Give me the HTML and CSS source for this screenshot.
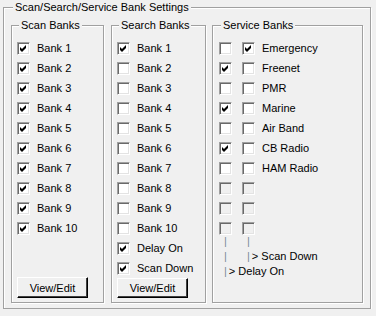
FILE: index.html
```html
<!DOCTYPE html>
<html lang="en">
<head>
    <meta charset="UTF-8">
    <title>Bank Settings</title>
    <link rel="stylesheet" href="styles.css">
</head>
<body>
    <fieldset class="group outer">
        <legend>Scan/Search/Service Bank Settings</legend>
        <div class="columns">

            <!-- Scan banks -->
            <fieldset class="group bank-group scan">
                <legend>Scan Banks</legend>
                <div class="rows">
                    <div class="row"><span class="box on"><svg viewBox="0 0 11 11"><polygon points="2,4 4,6 8,2 8,5 4,9 2,7"/></svg></span>Bank 1</div>
                    <div class="row"><span class="box on"><svg viewBox="0 0 11 11"><polygon points="2,4 4,6 8,2 8,5 4,9 2,7"/></svg></span>Bank 2</div>
                    <div class="row"><span class="box on"><svg viewBox="0 0 11 11"><polygon points="2,4 4,6 8,2 8,5 4,9 2,7"/></svg></span>Bank 3</div>
                    <div class="row"><span class="box on"><svg viewBox="0 0 11 11"><polygon points="2,4 4,6 8,2 8,5 4,9 2,7"/></svg></span>Bank 4</div>
                    <div class="row"><span class="box on"><svg viewBox="0 0 11 11"><polygon points="2,4 4,6 8,2 8,5 4,9 2,7"/></svg></span>Bank 5</div>
                    <div class="row"><span class="box on"><svg viewBox="0 0 11 11"><polygon points="2,4 4,6 8,2 8,5 4,9 2,7"/></svg></span>Bank 6</div>
                    <div class="row"><span class="box on"><svg viewBox="0 0 11 11"><polygon points="2,4 4,6 8,2 8,5 4,9 2,7"/></svg></span>Bank 7</div>
                    <div class="row"><span class="box on"><svg viewBox="0 0 11 11"><polygon points="2,4 4,6 8,2 8,5 4,9 2,7"/></svg></span>Bank 8</div>
                    <div class="row"><span class="box on"><svg viewBox="0 0 11 11"><polygon points="2,4 4,6 8,2 8,5 4,9 2,7"/></svg></span>Bank 9</div>
                    <div class="row"><span class="box on"><svg viewBox="0 0 11 11"><polygon points="2,4 4,6 8,2 8,5 4,9 2,7"/></svg></span>Bank 10</div>
                </div>
                <button class="btn">View/Edit</button>
            </fieldset>

            <!-- Search banks -->
            <fieldset class="group bank-group search">
                <legend>Search Banks</legend>
                <div class="rows">
                    <div class="row"><span class="box on"><svg viewBox="0 0 11 11"><polygon points="2,4 4,6 8,2 8,5 4,9 2,7"/></svg></span>Bank 1</div>
                    <div class="row"><span class="box"></span>Bank 2</div>
                    <div class="row"><span class="box"></span>Bank 3</div>
                    <div class="row"><span class="box"></span>Bank 4</div>
                    <div class="row"><span class="box"></span>Bank 5</div>
                    <div class="row"><span class="box"></span>Bank 6</div>
                    <div class="row"><span class="box"></span>Bank 7</div>
                    <div class="row"><span class="box"></span>Bank 8</div>
                    <div class="row"><span class="box"></span>Bank 9</div>
                    <div class="row"><span class="box"></span>Bank 10</div>
                    <div class="row"><span class="box on"><svg viewBox="0 0 11 11"><polygon points="2,4 4,6 8,2 8,5 4,9 2,7"/></svg></span>Delay On</div>
                    <div class="row"><span class="box on"><svg viewBox="0 0 11 11"><polygon points="2,4 4,6 8,2 8,5 4,9 2,7"/></svg></span>Scan Down</div>
                </div>
                <button class="btn">View/Edit</button>
            </fieldset>

            <!-- Service banks: col 1 = delay, col 2 = scan down -->
            <fieldset class="group bank-group service">
                <legend>Service Banks</legend>
                <div class="rows">
                    <div class="row"><span class="box"></span><span class="box on"><svg viewBox="0 0 11 11"><polygon points="2,4 4,6 8,2 8,5 4,9 2,7"/></svg></span>Emergency</div>
                    <div class="row"><span class="box on"><svg viewBox="0 0 11 11"><polygon points="2,4 4,6 8,2 8,5 4,9 2,7"/></svg></span><span class="box"></span>Freenet</div>
                    <div class="row"><span class="box"></span><span class="box"></span>PMR</div>
                    <div class="row"><span class="box on"><svg viewBox="0 0 11 11"><polygon points="2,4 4,6 8,2 8,5 4,9 2,7"/></svg></span><span class="box"></span>Marine</div>
                    <div class="row"><span class="box"></span><span class="box"></span>Air Band</div>
                    <div class="row"><span class="box on"><svg viewBox="0 0 11 11"><polygon points="2,4 4,6 8,2 8,5 4,9 2,7"/></svg></span><span class="box"></span>CB Radio</div>
                    <div class="row"><span class="box"></span><span class="box"></span>HAM Radio</div>
                    <div class="row"><span class="box off"></span><span class="box off"></span></div>
                    <div class="row"><span class="box off"></span><span class="box off"></span></div>
                    <div class="row"><span class="box off"></span><span class="box off"></span></div>
                </div>
                <div class="tree">
                    <div class="tree-line"><span class="bar first">|</span><span class="bar">|</span></div>
                    <div class="tree-line"><span class="bar first">|</span><span class="bar">|</span><span class="note">&gt; Scan Down</span></div>
                    <div class="tree-line"><span class="bar">|</span><span class="note">&gt; Delay On</span></div>
                </div>
            </fieldset>

        </div>
    </fieldset>
</body>
</html>
```

FILE: styles.css
```css
/* page */
body {
    margin: 0;
    background: #f0f0f0;
    font-family: "Liberation Sans", Arial, sans-serif;
    font-size: 11px;
    color: #000;
}

/* etched group boxes */
.group {
    margin: 0;
    border: 1px solid #a0a0a0;
    box-shadow: inset 1px 1px 0 #fff, 1px 1px 0 #fff;
    min-width: 0;
    box-sizing: border-box;
}

.group legend {
    margin-left: 2px;
    padding: 0 2px;
    line-height: 13px;
    background: #f0f0f0;
}

.outer {
    margin: 1px 0 0 3px;
    width: 368px;
    padding: 5px 7px 5px 7px;
}

.columns {
    display: flex;
}

.bank-group {
    height: 284px;
    padding: 6px 5px 2px 5px;
    display: flex;
    flex-direction: column;
}

.scan {
    width: 93px;
    margin-right: 7px;
}

.search {
    width: 95px;
    margin-right: 6px;
}

.service {
    width: 151px;
    padding-left: 6px;
}

/* checkbox rows */
.row {
    display: flex;
    align-items: center;
    height: 20px;
}

.box {
    width: 13px;
    height: 13px;
    box-sizing: border-box;
    margin-right: 7px;
    border: 1px solid;
    border-color: #a0a0a0 #fff #fff #a0a0a0;
    box-shadow: inset 1px 1px 0 #696969, inset -1px -1px 0 #e3e3e3;
    background: #fff;
    flex: none;
}

.box svg {
    display: block;
    width: 11px;
    height: 11px;
}

.box.off {
    background: #f0f0f0;
}

.service .box:first-child {
    margin-right: 10px;
}

/* buttons */
.btn {
    margin-top: auto;
    width: 71px;
    height: 21px;
    margin-bottom: 2px;
    padding: 0;
    font-family: inherit;
    font-size: 11px;
    color: #000;
    background: #f0f0f0;
    border: 1px solid;
    border-color: #fff #000 #000 #fff;
    box-shadow: inset -1px -1px 0 #404040;
}

/* service tree legend */
.tree {
    margin-top: -4px;
    padding-left: 5px;
    line-height: 15px;
}

.tree-line {
    display: flex;
    height: 15px;
}

.bar {
    color: #7a8899;
}

.bar.first {
    width: 23px;
}

.note {
    margin-left: 2px;
}
```
